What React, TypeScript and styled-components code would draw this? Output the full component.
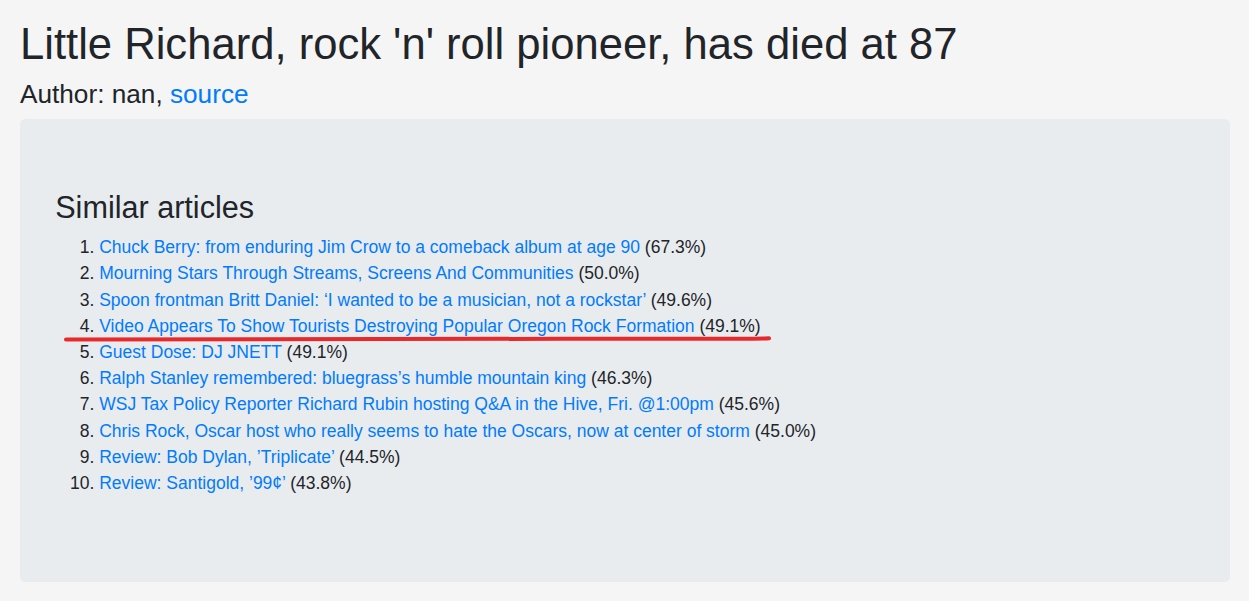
import React from 'react'
import styled, { createGlobalStyle } from 'styled-components'

const GlobalStyle = createGlobalStyle`
  html, body {
    margin: 0;
    padding: 0;
    background: #f5f5f5;
    color: #212529;
    font-family: "Liberation Sans", Arial, sans-serif;
    font-size: 17.5px;
    line-height: 26.2px;
  }
  * { box-sizing: border-box; }
`

const Page = styled.div`
  padding: 18px 19px 0 20px;
`

const Title = styled.h1`
  margin: 0 0 8.8px;
  font-size: 43.6px;
  font-weight: 400;
  line-height: 52.8px;
`

const Byline = styled.h4`
  margin: 0 0 10.6px;
  font-size: 26.2px;
  font-weight: 400;
  line-height: 28.8px;
`

const Link = styled.a`
  color: #007bff;
  text-decoration: none;
`

const Jumbotron = styled.div`
  background: #e9ecef;
  border-radius: 5.3px;
  padding: 70.4px 35.2px 48px;
  height: 463px;
`

const SectionTitle = styled.h3`
  margin: 0 0 7.8px;
  font-size: 30.6px;
  font-weight: 400;
  line-height: 37px;
`

const List = styled.ol`
  margin: 0;
  padding-left: 44px;
`

const Item = styled.li<{ $marked?: boolean }>`
  position: ${({ $marked }) => ($marked ? 'relative' : 'static')};
`

const Mark = styled.svg`
  position: absolute;
  left: -36px;
  top: 20px;
  width: 712px;
  height: 12px;
  pointer-events: none;
`

const articles = [
  { title: 'Chuck Berry: from enduring Jim Crow to a comeback album at age 90', score: '67.3%' },
  { title: 'Mourning Stars Through Streams, Screens And Communities', score: '50.0%' },
  { title: 'Spoon frontman Britt Daniel: \u2018I wanted to be a musician, not a rockstar\u2019', score: '49.6%' },
  { title: 'Video Appears To Show Tourists Destroying Popular Oregon Rock Formation', score: '49.1%', marked: true },
  { title: 'Guest Dose: DJ JNETT', score: '49.1%' },
  { title: 'Ralph Stanley remembered: bluegrass\u2019s humble mountain king', score: '46.3%' },
  { title: 'WSJ Tax Policy Reporter Richard Rubin hosting Q&A in the Hive, Fri. @1:00pm', score: '45.6%' },
  { title: 'Chris Rock, Oscar host who really seems to hate the Oscars, now at center of storm', score: '45.0%' },
  { title: 'Review: Bob Dylan, \u2019Triplicate\u2019', score: '44.5%' },
  { title: 'Review: Santigold, \u201999\u00a2\u2019', score: '43.8%' },
]

const App: React.FC = () => {
  return (
    <Page>
      <GlobalStyle />
      <Title>Little Richard, rock 'n' roll pioneer, has died at 87</Title>
      <Byline>
        Author: nan, <Link href="#">source</Link>
      </Byline>
      <Jumbotron>
        <SectionTitle>Similar articles</SectionTitle>
        <List>
          {articles.map((a) => (
            <Item key={a.title} $marked={a.marked}>
              <Link href="#">{a.title}</Link> ({a.score})
              {a.marked && (
                <Mark viewBox="0 0 712 12">
                  <path
                    d="M3 6.5 Q 300 5.6 500 5.8 T 706 5.2"
                    fill="none"
                    stroke="#e8292c"
                    strokeWidth="4"
                    strokeLinecap="round"
                  />
                </Mark>
              )}
            </Item>
          ))}
        </List>
      </Jumbotron>
    </Page>
  )
}

export default App
